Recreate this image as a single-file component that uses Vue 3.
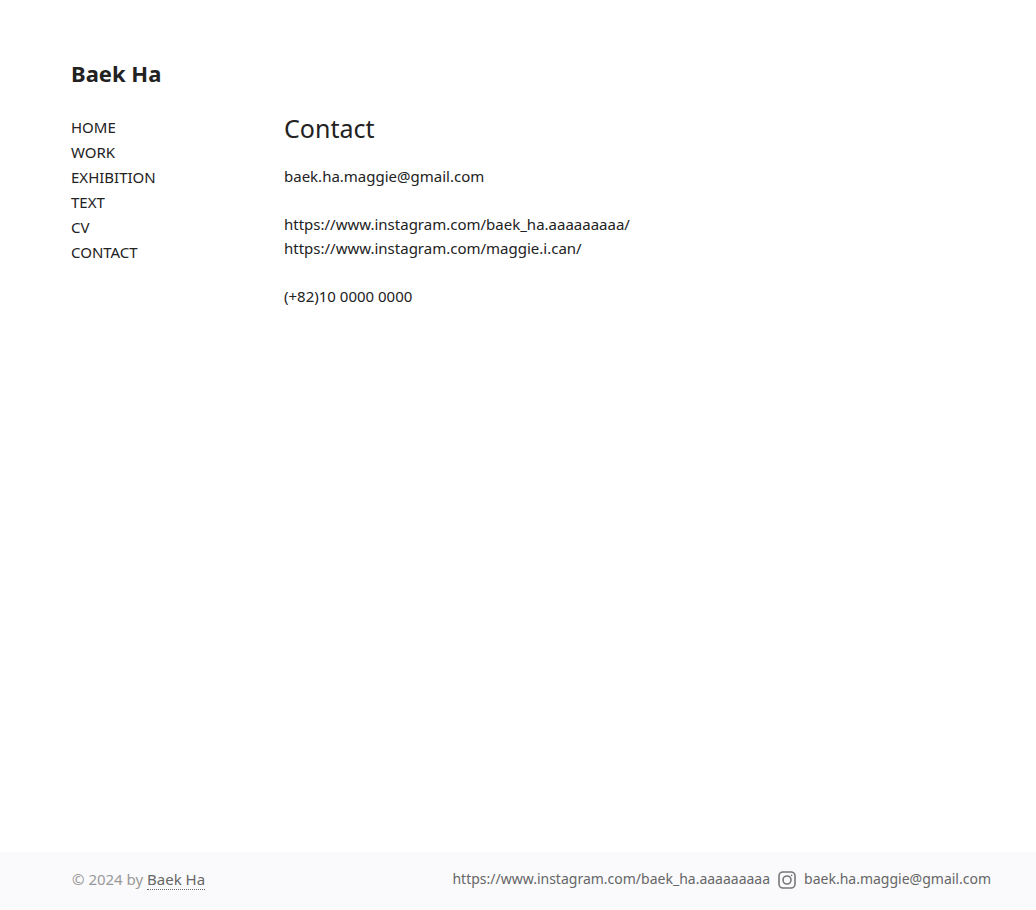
<script setup>
const nav = ['Home', 'Work', 'Exhibition', 'Text', 'CV', 'Contact']
</script>

<template>
  <div class="page">
    <header class="brand"><a href="#">Baek Ha</a></header>
    <div class="body">
      <nav class="nav" aria-label="Main">
        <a v-for="item in nav" :key="item" href="#">{{ item.toUpperCase() }}</a>
      </nav>
      <main class="content">
        <h1>Contact</h1>
        <p>baek.ha.maggie@gmail.com</p>
        <p>
          https://www.instagram.com/baek_ha.aaaaaaaaa/<br />
          https://www.instagram.com/maggie.i.can/
        </p>
        <p>(+82)10 0000 0000</p>
      </main>
    </div>
    <footer class="footer">
      <div class="copy">© 2024 by <a href="#">Baek Ha</a></div>
      <div class="social">
        <a href="#">https://www.instagram.com/baek_ha.aaaaaaaaa</a>
        <a href="#" class="icon" aria-label="Instagram">
          <svg width="18" height="18" viewBox="0 0 18 18" fill="none" stroke="currentColor" stroke-width="1.6">
            <rect x="1" y="1" width="16" height="16" rx="4" />
            <circle cx="9" cy="9" r="4" />
            <circle cx="13.6" cy="4.4" r="0.8" fill="currentColor" stroke="none" />
          </svg>
        </a>
        <a href="#">baek.ha.maggie@gmail.com</a>
      </div>
    </footer>
  </div>
</template>

<style>
body {
  background: #fff;
}
</style>

<style scoped>
.page {
  display: flex;
  flex-direction: column;
  min-height: 100vh;
  box-sizing: border-box;
  padding-top: 57px;
  font-family: "Noto Sans", "Open Sans", sans-serif;
  font-size: 15px;
  color: #222;
}
a {
  color: inherit;
  text-decoration: none;
}
.brand {
  padding-left: 71px;
  font-size: 22px;
  line-height: 32px;
  font-weight: 700;
}
.body {
  display: flex;
  flex: 1;
  padding: 26px 45px 24px 71px;
}
.nav {
  display: flex;
  flex-direction: column;
  width: 213px;
  line-height: 25px;
}
.content {
  flex: 1;
}
h1 {
  margin: 0 0 23px;
  font-size: 25px;
  line-height: 26px;
  font-weight: 400;
}
p {
  margin: 0 0 24px;
  line-height: 24px;
}
.footer {
  display: flex;
  justify-content: space-between;
  align-items: center;
  height: 58px;
  padding: 0 45px 4px 72px;
  box-sizing: border-box;
  background: #fafafc;
  line-height: 20px;
  color: #999;
}
.copy a {
  color: #666;
  border-bottom: 1px dotted #666;
}
.social {
  display: flex;
  align-items: center;
  gap: 8px;
  font-size: 14px;
  color: #666;
}
.icon {
  display: flex;
  padding-top: 2px;
  color: #777;
}
</style>
